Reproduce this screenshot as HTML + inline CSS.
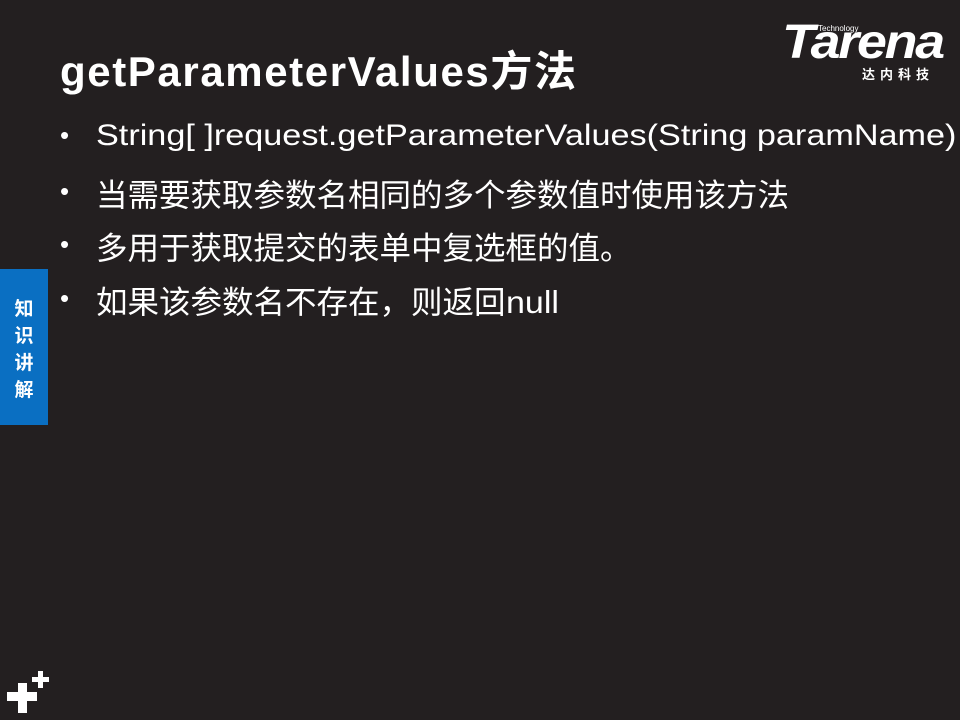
<!DOCTYPE html>
<html><head><meta charset="utf-8"><style>
body{margin:0;width:960px;height:720px;background:#231f20;position:relative;overflow:hidden;font-family:"Liberation Sans","Noto Sans CJK SC",sans-serif;color:#fff}
.t{position:absolute;left:60px;top:38px;font-size:42px;font-weight:bold;white-space:nowrap;letter-spacing:1.6px}
.b{position:absolute;left:60px;font-size:31.5px;white-space:nowrap;height:40px;width:890px}
.b span{position:absolute;left:0;top:5px;font-size:26px}
.b i{font-style:normal;position:absolute;left:36px;top:-1px;transform-origin:0 0}
.tab{position:absolute;left:0;top:269px;width:48px;height:156px;background:#0a6fc2;font-weight:bold;font-size:19px;text-align:center;line-height:27px;padding-top:27px;box-sizing:border-box}
</style></head><body>
<div class="t">getParameterValues方法</div>
<div class="b" style="top:118px"><span style="top:2px">•</span><i style="font-size:30px;top:1px;transform:scaleX(1.14)">String[ ]request.getParameterValues(String paramName)</i></div>
<div class="b" style="top:171px"><span>•</span><i>当需要获取参数名相同的多个参数值时使用该方法</i></div>
<div class="b" style="top:224px"><span>•</span><i>多用于获取提交的表单中复选框的值。</i></div>
<div class="b" style="top:278px"><span>•</span><i>如果该参数名不存在，则返回<b style="font-weight:normal;display:inline-block;transform:scaleX(1.08);transform-origin:0 0">null</b></i></div>
<div class="tab">知<br>识<br>讲<br>解</div>
<div style="position:absolute;left:782px;top:18px;font-size:48px;font-weight:bold;font-style:italic;letter-spacing:-2px;line-height:50px;transform:scaleX(1.12);transform-origin:0 0">Tarena</div>
<div style="position:absolute;left:818px;top:24px;font-size:8px">Technology</div>
<div style="position:absolute;left:862px;top:64px;font-size:13px;font-weight:bold;letter-spacing:5px">达内科技</div>
<svg style="position:absolute;left:0;top:660px" width="60" height="60">
<rect x="7" y="32" width="30" height="9" fill="#fff"/><rect x="18" y="23" width="9" height="30" fill="#fff"/>
<rect x="32" y="17" width="17" height="5" fill="#fff"/><rect x="38" y="11" width="5" height="17" fill="#fff"/>
</svg>
</body></html>
